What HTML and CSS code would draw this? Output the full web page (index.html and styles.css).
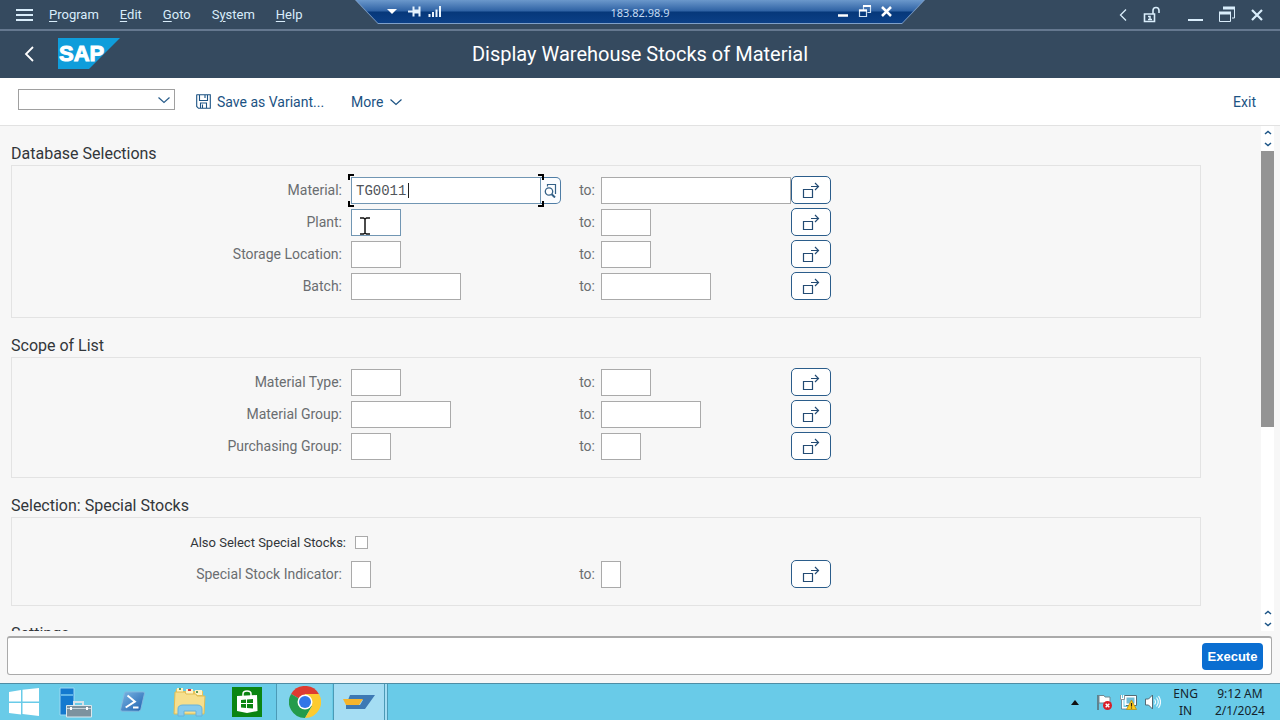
FILE: index.html
```
<!DOCTYPE html>
<html lang="en">
<head>
    <meta charset="UTF-8">
    <meta name="viewport" content="width=device-width, initial-scale=1.0">
    <title>Display Warehouse Stocks of Material</title>
    <link rel="stylesheet" href="styles.css">
</head>
<body>
    <!-- Shared icons -->
    <svg class="sprite" aria-hidden="true">
        <symbol id="icon-multi" viewBox="0 0 18 18">
            <path d="M1.500 8.500h9v8h-9zM9 5.500h7.500M13 2l3.500 3.500L13 9" fill="none" stroke="currentColor" stroke-width="1.200"/>
        </symbol>
        <symbol id="icon-down" viewBox="0 0 14 8">
            <path d="M1.500 1.500L7 6.500l5.500-5" fill="none" stroke="currentColor" stroke-width="1.200"/>
        </symbol>
        <symbol id="icon-scroll" viewBox="0 0 8 5">
            <path d="M1 4L4 1.500 7 4" fill="none" stroke="currentColor" stroke-width="1.500"/>
        </symbol>
    </svg>

    <!-- Remote desktop connection bar -->
    <div class="connection-border">
        <div class="connection">
            <svg class="connection-icons" width="60" height="23" viewBox="0 0 60 23">
                <path d="M3 9h10l-5 5z" fill="#fff"/>
                <path d="M24 11.500h5M29.500 6.500v10M35.500 6.500v10" fill="none" stroke="#e5f2fd" stroke-width="2"/>
                <path d="M30 11.500h5" stroke="#e5f2fd" stroke-width="4"/>
                <path d="M45.500 14v3M49 12v5M52.500 9.500v7.500M56 6v11" stroke="#eef6fd" stroke-width="2"/>
            </svg>
            <span class="connection-host">183.82.98.9</span>
            <svg class="connection-icons" width="60" height="23" viewBox="0 0 60 23">
                <path d="M2 15.500h10" stroke="#fff" stroke-width="2.500"/>
                <path d="M27.500 10v-3.500h7v6h-3M23.500 10h7v6.500h-7z" fill="none" stroke="#cfe0f2" stroke-width="1.200"/>
                <path d="M27 6h8M23 10.500h8" stroke="#fff" stroke-width="2"/>
                <path d="M46 7l9 9M55 7l-9 9" stroke="#fff" stroke-width="2.500"/>
            </svg>
        </div>
    </div>

    <header>
        <nav class="menubar">
            <button class="icon-button burger" aria-label="Menu">
                <svg width="17" height="14" viewBox="0 0 17 14"><path d="M0 2h17M0 7h17M0 12h17" stroke="#d9edfb" stroke-width="2"/></svg>
            </button>
            <a href="#"><u>P</u>rogram</a>
            <a href="#"><u>E</u>dit</a>
            <a href="#"><u>G</u>oto</a>
            <a href="#">S<u>y</u>stem</a>
            <a href="#"><u>H</u>elp</a>
            <div class="window-buttons">
                <button class="icon-button" aria-label="Previous"><svg width="8" height="14" viewBox="0 0 8 14"><path d="M7 1.500L1.500 7 7 12.500" fill="none" stroke="#d9edfb" stroke-width="1.300"/></svg></button>
                <button class="icon-button" aria-label="Unlock"><svg width="18" height="18" viewBox="0 0 18 18"><path d="M1.500 8h10v7.500h-10zM10 8V4.500a3 3 0 0 1 6 0V7" fill="none" stroke="#d9edfb" stroke-width="1.600"/><path d="M5 10.500h2v3M5 13.500h4" fill="none" stroke="#d9edfb" stroke-width="1.500"/></svg></button>
                <button class="icon-button minimize" aria-label="Minimize"><svg width="15" height="18" viewBox="0 0 15 18"><path d="M0 14h15" stroke="#d9edfb" stroke-width="2"/></svg></button>
                <button class="icon-button" aria-label="Restore"><svg width="16" height="18" viewBox="0 0 16 18"><path d="M4 2h12M0 7h12" stroke="#d9edfb" stroke-width="3"/><path d="M15.500 3v9H13M.5 7v8.500h11V7" fill="none" stroke="#d9edfb"/></svg></button>
                <button class="icon-button" aria-label="Close"><svg width="12" height="12" viewBox="0 0 12 12"><path d="M1 1l10 10M11 1L1 11" stroke="#d9edfb" stroke-width="2.200"/></svg></button>
            </div>
        </nav>
        <div class="titlebar">
            <button class="icon-button back" aria-label="Back"><svg width="10" height="16" viewBox="0 0 10 16"><path d="M9 1L2 8l7 7" fill="none" stroke="#fff" stroke-width="1.800"/></svg></button>
            <svg class="logo" width="62" height="31" viewBox="0 0 62 31" role="img" aria-label="SAP">
                <path d="M0 0h62L31 31H0z" fill="#0f9ddb"/>
                <text class="logo-text" x="1" y="23">SAP</text>
            </svg>
            <h1>Display Warehouse Stocks of Material</h1>
        </div>
    </header>

    <div class="toolbar">
        <div class="command">
            <select aria-label="Command"><option></option></select>
            <svg class="command-arrow" width="14" height="8"><use href="#icon-down"/></svg>
        </div>
        <button class="tool variant">
            <svg width="15" height="15" viewBox="0 0 15 15"><path d="M1 .7h13.300v13.600H2.500L.7 12.500V1zM3.500 1v5.500h8V1M4.500 14V9h6v5M6.500 10.500V14M9 1v3" fill="none" stroke="currentColor" stroke-width="1.100"/></svg>
            Save as Variant...
        </button>
        <button class="tool">More <svg class="more-arrow" width="14" height="8"><use href="#icon-down"/></svg></button>
        <button class="tool exit">Exit</button>
    </div>

    <div class="content">
        <main>
            <section>
                <h2>Database Selections</h2>
                <div class="group">
                    <div class="row">
                        <label for="material">Material:</label>
                        <div class="cell">
                            <div class="field-focus">
                                <input id="material" class="w190 active" type="text" value="TG0011">
                                <span class="caret"></span>
                                <i class="corner top left"></i><i class="corner top right"></i>
                                <i class="corner bottom left"></i><i class="corner bottom right"></i>
                            </div>
                            <button class="search-help" aria-label="Search help"><svg width="13" height="15" viewBox="0 0 13 15"><path d="M3.500 3.500V1.500h8v9.500" fill="none" stroke="currentColor" stroke-width="1.200"/><circle cx="5" cy="8.500" r="3.700" fill="#fff" stroke="currentColor" stroke-width="1.300"/><path d="M7.700 11.200l3.300 3.300" stroke="currentColor" stroke-width="2"/></svg></button>
                        </div>
                        <label for="material-to">to:</label>
                        <div class="cell"><input id="material-to" class="w190" type="text"></div>
                        <button class="multi" aria-label="Multiple selection"><svg width="18" height="18"><use href="#icon-multi"/></svg></button>
                    </div>
                    <div class="row">
                        <label for="plant">Plant:</label>
                        <div class="cell">
                            <input id="plant" class="w50 active" type="text">
                            <svg class="pointer" width="12" height="18" viewBox="0 0 12 18"><path d="M1 1h3.500l1.500 1 1.500-1H11M6 2v14M1 17h3.500l1.500-1 1.500 1H11" fill="none" stroke="#111" stroke-width="1.500"/></svg>
                        </div>
                        <label for="plant-to">to:</label>
                        <div class="cell"><input id="plant-to" class="w50" type="text"></div>
                        <button class="multi" aria-label="Multiple selection"><svg width="18" height="18"><use href="#icon-multi"/></svg></button>
                    </div>
                    <div class="row">
                        <label for="storage">Storage Location:</label>
                        <div class="cell"><input id="storage" class="w50" type="text"></div>
                        <label for="storage-to">to:</label>
                        <div class="cell"><input id="storage-to" class="w50" type="text"></div>
                        <button class="multi" aria-label="Multiple selection"><svg width="18" height="18"><use href="#icon-multi"/></svg></button>
                    </div>
                    <div class="row">
                        <label for="batch">Batch:</label>
                        <div class="cell"><input id="batch" class="w110" type="text"></div>
                        <label for="batch-to">to:</label>
                        <div class="cell"><input id="batch-to" class="w110" type="text"></div>
                        <button class="multi" aria-label="Multiple selection"><svg width="18" height="18"><use href="#icon-multi"/></svg></button>
                    </div>
                </div>
            </section>

            <section>
                <h2>Scope of List</h2>
                <div class="group">
                    <div class="row">
                        <label for="mtype">Material Type:</label>
                        <div class="cell"><input id="mtype" class="w50" type="text"></div>
                        <label for="mtype-to">to:</label>
                        <div class="cell"><input id="mtype-to" class="w50" type="text"></div>
                        <button class="multi" aria-label="Multiple selection"><svg width="18" height="18"><use href="#icon-multi"/></svg></button>
                    </div>
                    <div class="row">
                        <label for="mgroup">Material Group:</label>
                        <div class="cell"><input id="mgroup" class="w100" type="text"></div>
                        <label for="mgroup-to">to:</label>
                        <div class="cell"><input id="mgroup-to" class="w100" type="text"></div>
                        <button class="multi" aria-label="Multiple selection"><svg width="18" height="18"><use href="#icon-multi"/></svg></button>
                    </div>
                    <div class="row">
                        <label for="pgroup">Purchasing Group:</label>
                        <div class="cell"><input id="pgroup" class="w40" type="text"></div>
                        <label for="pgroup-to">to:</label>
                        <div class="cell"><input id="pgroup-to" class="w40" type="text"></div>
                        <button class="multi" aria-label="Multiple selection"><svg width="18" height="18"><use href="#icon-multi"/></svg></button>
                    </div>
                </div>
            </section>

            <section>
                <h2>Selection: Special Stocks</h2>
                <div class="group">
                    <div class="row check-row">
                        <label for="special">Also Select Special Stocks:</label>
                        <div class="cell"><input id="special" type="checkbox"></div>
                    </div>
                    <div class="row">
                        <label for="indicator">Special Stock Indicator:</label>
                        <div class="cell"><input id="indicator" class="w20" type="text"></div>
                        <label for="indicator-to">to:</label>
                        <div class="cell"><input id="indicator-to" class="w20" type="text"></div>
                        <button class="multi" aria-label="Multiple selection"><svg width="18" height="18"><use href="#icon-multi"/></svg></button>
                    </div>
                </div>
            </section>

            <section>
                <h2>Settings</h2>
            </section>
        </main>
        <div class="scrollbar">
            <svg class="arrow" width="8" height="5"><use href="#icon-scroll"/></svg>
            <svg class="arrow flip" width="8" height="5"><use href="#icon-scroll"/></svg>
            <div class="track"><div class="thumb"></div></div>
            <svg class="arrow" width="8" height="5"><use href="#icon-scroll"/></svg>
            <svg class="arrow flip" width="8" height="5"><use href="#icon-scroll"/></svg>
        </div>
    </div>

    <div class="footer">
        <button class="execute">Execute</button>
    </div>

    <!-- Windows taskbar -->
    <div class="taskbar">
        <button class="task start" aria-label="Start"><svg width="30" height="28" viewBox="0 0 30 28"><path d="M0 4l12-2v11.500H0zM13.500 1.700L30 0v13.500H13.500zM0 15h12v11.500L0 25zM13.500 15H30v13l-16.500-2z" fill="#fff"/></svg></button>
        <button class="task" aria-label="Server Manager"><svg width="34" height="31" viewBox="0 0 34 31"><path d="M1 1h14v27H1z" fill="#1379cf" stroke="#9ed9f3"/><path d="M2 8h12" stroke="#79c8f1" stroke-width="1.500"/><path d="M15 18v-3h9v3" fill="none" stroke="#d8e3e9" stroke-width="2"/><path d="M7.500 18.500h25v11.500h-25z" fill="#7c929f" stroke="#dce8ed"/><path d="M8 21.500h24" stroke="#c6d4db"/><path d="M12 20v3M28 20v3" stroke="#fff" stroke-width="2"/></svg></button>
        <button class="task" aria-label="PowerShell"><svg width="28" height="22" viewBox="0 0 30 24">
            <defs><linearGradient id="ps" x1="0" y1="0" x2="1" y2="1"><stop offset="0" stop-color="#7bb7e4"/><stop offset="1" stop-color="#1d5fae"/></linearGradient></defs>
            <path d="M7 1h19q2 0 1.500 2l-4 17q-.5 2-2.500 2H3q-2 0-1.500-2l4-17q.5-2 1.500-2z" fill="url(#ps)" stroke="#85b9de"/><path d="M9 5l8 6.500-10 6.500M15 18h6" fill="none" stroke="#fff" stroke-width="2.200"/></svg></button>
        <button class="task" aria-label="File Explorer"><svg width="34" height="32" viewBox="0 0 34 32"><path d="M3 3h6l1 2h20v23H2z" fill="#e9c65c"/><path d="M4 2h6v5H4zM13 3h7v5h-7zM22 4h7v5h-7z" fill="#fff3c4"/><path d="M6 2h2v2H6zM23 5h2v2h-2z" fill="#5b9b59"/><path d="M15 3h3v2h-3z" fill="#d33"/><path d="M2 6h10l1 2h10l1 2h8l-1 18H1z" fill="#f7df8d" stroke="#dfbd55"/><path d="M5 30V23q0-4 5-4h14q5 0 5 4v7h-6v-5H11v5z" fill="#86cbee" stroke="#66b2dc"/></svg></button>
        <button class="task" aria-label="Store"><svg width="30" height="30" viewBox="0 0 30 30"><path d="M0 0h30v30H0z" fill="#0b8512"/><path d="M5 9l20-1 .5 16L15 26 5 24z" fill="#fff"/><path d="M11 9V7q0-3 4-3 4 0 4 3v2" fill="none" stroke="#fff" stroke-width="1.500"/><path d="M9 13l5-.5V16H9zM15 12.500l6-.5v4h-6zM9 17h5v4l-5-.5zM15 17h6v4.500l-6-.5z" fill="#0b8512"/></svg></button>
        <button class="task open" aria-label="Chrome"><svg width="32" height="32" viewBox="0 0 32 32"><path d="M16 16L2.100 8A16 16 0 0 1 29.900 8z" fill="#dd3b30"/><path d="M16 16L2.100 8A16 16 0 0 0 16 32l7-12z" fill="#249b4b"/><path d="M16 16l7 4-7 12A16 16 0 0 0 29.900 8H16z" fill="#fccb30"/><circle cx="16" cy="16" r="7.500" fill="#fff"/><circle cx="16" cy="16" r="6" fill="#3176e8"/></svg></button>
        <button class="task open current" aria-label="SAP Logon"><svg width="32" height="16" viewBox="0 0 32 16"><path d="M7 1h25L22 15H3v-4h14l3-5H5z" fill="#3d79b4"/><path d="M0 5h20l-4 6H3z" fill="#f6b52d"/></svg></button>
        <div class="stack"></div>
        <div class="tray">
            <svg width="8" height="5" viewBox="0 0 8 5"><path d="M0 5l4-5 4 5z" fill="#111"/></svg>
            <svg class="tray-first" width="16" height="16" viewBox="0 0 16 16"><path d="M2 1v15" stroke="#5a6a72" stroke-width="1.500"/><path d="M3 1.500h5l1 1.500h5v7H9L8 9H3z" fill="#fff" stroke="#718891"/><circle cx="11.500" cy="11.500" r="4.500" fill="#d81e28"/><path d="M9.700 9.700l3.600 3.600M13.300 9.700l-3.600 3.600" stroke="#fff" stroke-width="1.400"/></svg>
            <svg width="17" height="16" viewBox="0 0 17 16"><path d="M5.500 2.500h10v8h-10z" fill="#70bdd7" stroke="#fff" stroke-width="2"/><path d="M4.500 1.500h12v10H6" fill="none" stroke="#556b75"/><path d="M1 1v4h3V1M2.500 5v9h5" fill="none" stroke="#fff" stroke-width="2"/><path d="M.5 1v4.500h4V1M1.500 6v9h6" fill="none" stroke="#556b75" stroke-width=".7"/><path d="M11.500 6l5 9.500h-10z" fill="#ffcb19" stroke="#b78b08" stroke-width=".7"/><path d="M11.500 9v3.500M11.500 13.500v1" stroke="#222" stroke-width="1.200"/></svg>
            <svg width="16" height="16" viewBox="0 0 16 16"><path d="M.5 5h3l4-4v14l-4-4h-3z" fill="#fff" stroke="#536b76"/><path d="M9.500 5.500q2 2.500 0 5M11.500 3.500q3.500 4.500 0 9M13.500 2q4 6 0 12" fill="none" stroke="#f1fbff" stroke-width="1.200"/></svg>
            <div class="tray-text lang">ENG<br>IN</div>
            <div class="tray-text clock">9:12 AM<br>2/1/2024</div>
        </div>
    </div>
</body>
</html>
```
FILE: styles.css
```
* {
    box-sizing: border-box;
}
body {
    margin: 0;
    height: 100vh;
    display: flex;
    flex-direction: column;
    overflow: hidden;
    font-family: Roboto, "Noto Sans", sans-serif;
    font-size: 14px;
    color: #32363a;
    background-color: #f7f7f7;
}
button, input, select {
    font-family: inherit;
    font-size: 14px;
    margin: 0;
    padding: 0;
    border-radius: 0;
}
button {
    cursor: pointer;
    border: none;
    background: none;
}
svg {
    display: block;
    flex: none;
}
.sprite {
    position: absolute;
    width: 0;
    height: 0;
}

/* Connection bar */
.connection-border {
    position: absolute;
    top: 0;
    left: 50%;
    width: 570px;
    height: 24px;
    transform: translateX(-50%);
    background-color: #7fa0c9;
    clip-path: polygon(0 0, 100% 0, calc(100% - 23px) 100%, 23px 100%);
}
.connection {
    height: 23px;
    padding: 0 29px;
    display: flex;
    align-items: center;
    justify-content: space-between;
    background: linear-gradient(#6b98cb 0, #2f62a4 11px, #06387a 12px, #0c4087 23px);
    clip-path: polygon(1px 0, calc(100% - 1px) 0, calc(100% - 23px) 100%, 23px 100%);
}
.connection-host {
    font-family: "Noto Sans", sans-serif;
    font-size: 11px;
    line-height: 23px;
    padding-top: 1px;
    color: #c5dbf2;
}

/* Header */
header {
    background-color: #354a5f;
    color: #d9edfb;
}
.menubar {
    height: 31px;
    display: flex;
    align-items: center;
    gap: 21px;
    padding: 0 17px 0 16px;
    border-bottom: 2px solid #65788f;
}
.menubar a {
    font-size: 13px;
    color: #d9edfb;
    text-decoration: none;
}
.menubar u {
    text-underline-offset: 2px;
}
.burger {
    margin-right: -5px;
}
.window-buttons {
    margin-left: auto;
    display: flex;
    align-items: center;
    gap: 16px;
}
.icon-button.minimize {
    margin-left: 11px;
}
.titlebar {
    height: 47px;
    display: grid;
    grid-template-columns: 34px 80px 1fr 138px;
    align-items: center;
    padding-left: 24px;
    padding-bottom: 2px;
}
.logo-text {
    font-family: "Liberation Sans", Arial, sans-serif;
    font-size: 22px;
    font-weight: bold;
    fill: #fff;
    stroke: #fff;
    stroke-width: 1px;
}
h1 {
    margin: 0;
    text-align: center;
    font-size: 20px;
    font-weight: normal;
    color: #fff;
}

/* Toolbar */
.toolbar {
    height: 48px;
    display: flex;
    align-items: center;
    padding: 0 24px 0 18px;
    background-color: #fff;
    border-bottom: 1px solid #e2e2e2;
}
.command {
    position: relative;
    margin-bottom: 5px;
}
.command select {
    display: block;
    width: 157px;
    height: 21px;
    appearance: none;
    background-color: #fff;
    border: 1px solid #a0a0a0;
}
.command-arrow {
    position: absolute;
    top: 7px;
    right: 4px;
    color: #295d8b;
    pointer-events: none;
}
.tool {
    display: flex;
    align-items: center;
    gap: 6px;
    color: #1b5283;
}
.variant {
    margin: 0 27px 0 21px;
}
.exit {
    margin-left: auto;
}

/* Selection screen */
.content {
    flex: 1;
    min-height: 0;
    display: flex;
    padding-right: 6px;
}
main {
    flex: 1;
    overflow: hidden;
    padding: 0 60px 0 11px;
}
h2 {
    margin: 17px 0 0;
    font-size: 16px;
    line-height: 22px;
    font-weight: normal;
}
.group {
    padding: 8px 0 15px;
    border: 1px solid #e3e3e3;
}
.row {
    height: 32px;
    display: grid;
    grid-template-columns: 339px 228px 22px 190px 40px;
    align-items: center;
}
.row label {
    padding-right: 9px;
    text-align: right;
    white-space: nowrap;
    color: #6a6d70;
}
.row .cell + label {
    padding-right: 6px;
}
.row.check-row label {
    padding-right: 5px;
    font-size: 13px;
    color: #32363a;
}
.cell {
    position: relative;
    display: flex;
}
.row input[type="text"] {
    height: 27px;
    padding: 1px 4px 0;
    background-color: #fff;
    border: 1px solid #aaa;
    font-family: "Liberation Mono", monospace;
    color: #51555a;
    outline: none;
}
.row input.active {
    border-color: #7196b3;
}
.w20 {
    width: 20px;
}
.w40 {
    width: 40px;
}
.w50 {
    width: 50px;
}
.w100 {
    width: 100px;
}
.w110 {
    width: 110px;
}
.w190 {
    width: 190px;
}
.row input[type="checkbox"] {
    appearance: none;
    width: 13px;
    height: 13px;
    margin-left: 4px;
    background-color: #fff;
    border: 1px solid #aaa;
}
.field-focus {
    position: relative;
    display: flex;
}
.caret {
    position: absolute;
    left: 57px;
    top: 6px;
    width: 1px;
    height: 15px;
    background-color: #222;
}
/* black focus corners */
.corner {
    position: absolute;
    width: 6px;
    height: 6px;
    border: 0 solid #000;
}
.corner.top {
    top: -3px;
    border-top-width: 2px;
}
.corner.bottom {
    bottom: -3px;
    border-bottom-width: 2px;
}
.corner.left {
    left: -3px;
    border-left-width: 2px;
}
.corner.right {
    right: -3px;
    border-right-width: 2px;
}
.search-help {
    width: 20px;
    height: 27px;
    display: flex;
    align-items: center;
    justify-content: center;
    border: 1px solid #4f7da5;
    border-left: none;
    border-radius: 0 5px 5px 0;
    color: #346187;
    background-color: #fbfdff;
}
.multi {
    width: 40px;
    height: 28px;
    display: flex;
    align-items: center;
    justify-content: center;
    border: 1px solid #2b5d8b;
    border-radius: 5px;
    background-color: #fff;
    color: #234b73;
}
.pointer {
    position: absolute;
    left: 8px;
    top: 8px;
}

/* Scrollbar */
.scrollbar {
    width: 13px;
    display: flex;
    flex-direction: column;
    align-items: center;
    gap: 7px;
    padding: 4px 0;
    background-color: #fff;
    color: #1c5587;
}
.flip {
    transform: scaleY(-1);
}
.track {
    flex: 1;
    align-self: stretch;
    margin: -3px 0 0;
}
.thumb {
    height: 61%;
    background-color: #949494;
}

/* Footer */
.footer {
    height: 39px;
    margin: 5px 8px 8px 7px;
    padding: 0 8px;
    display: flex;
    align-items: center;
    justify-content: flex-end;
    background-color: #fff;
    border: 1px solid #aaa;
    border-top-width: 2px;
    border-radius: 3px;
}
.execute {
    width: 61px;
    height: 27px;
    border-radius: 4px;
    background-color: #0a6ed1;
    color: #fff;
    font-family: "Liberation Sans", Arial, sans-serif;
    font-size: 13px;
    font-weight: bold;
}

/* Taskbar */
.taskbar {
    height: 37px;
    display: flex;
    border-top: 1px solid #4f8da5;
    background-color: #69cbe8;
}
.task {
    width: 57px;
    display: flex;
    align-items: center;
    justify-content: center;
}
.task.start {
    width: 47px;
}
.task.open {
    width: 56px;
    margin-left: 1px;
    background-color: #80d3ec;
    border-left: 1px solid #4b9ab6;
}
.task.current {
    width: 52px;
    background-color: #a5ddf3;
    border-right: 1px solid #4b9ab6;
}
.stack {
    width: 3px;
    border-right: 1px solid #4b9ab6;
    background-color: #a5ddf3;
}
.tray {
    margin-left: auto;
    display: flex;
    align-items: center;
    gap: 8px;
    padding-right: 15px;
}
.tray-first {
    margin-left: 9px;
}
.tray-text {
    font-family: "Noto Sans", sans-serif;
    font-size: 12px;
    line-height: 17px;
    text-align: center;
    color: #14232c;
}
.lang {
    margin: 0 9px 0 4px;
}
```
